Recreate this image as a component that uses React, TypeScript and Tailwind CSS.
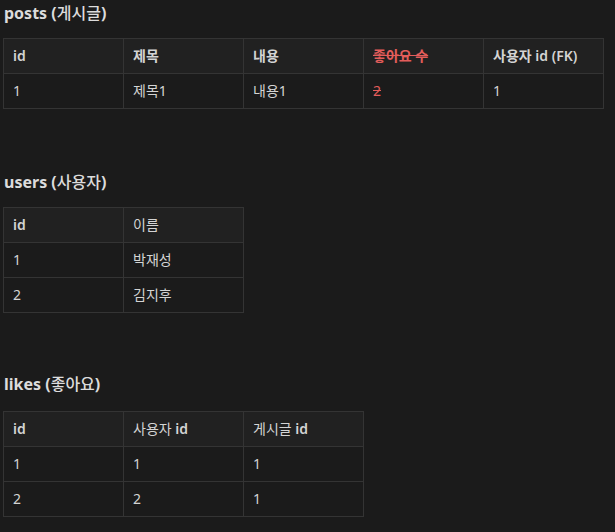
import type { ReactNode } from "react";

const font = {
  fontFamily: '"Noto Sans", "Noto Sans CJK KR", sans-serif',
};

type Cell = string | { text: string; strike: true } | { node: ReactNode };

const Table = ({ head, rows }: { head: Cell[]; rows: Cell[][] }) => {
  const render = (c: Cell) => {
    if (typeof c === "string") return c;
    if ("node" in c) return c.node;
    return <span className="text-[#e35d5b] line-through">{c.text}</span>;
  };
  return (
    <table className="border-collapse table-fixed text-[14px] text-[#d4d4d4]">
      <thead>
        <tr className="bg-[#212121]">
          {head.map((h, i) => (
            <th
              key={i}
              className="w-[120px] h-[35px] border border-[#343434] pl-[9px] pb-[2px] text-left font-semibold"
            >
              {render(h)}
            </th>
          ))}
        </tr>
      </thead>
      <tbody>
        {rows.map((r, i) => (
          <tr key={i}>
            {r.map((c, j) => (
              <td
                key={j}
                className="w-[120px] h-[35px] border border-[#343434] pl-[9px] pb-[2px] text-left"
              >
                {render(c)}
              </td>
            ))}
          </tr>
        ))}
      </tbody>
    </table>
  );
};

const Heading = ({ en, ko, className }: { en: string; ko: string; className: string }) => (
  <h2 className={`pl-px text-[16px] leading-[22px] font-bold text-[#dcdcdc] ${className}`}>
    {en} (<span className="font-medium">{ko}</span>)
  </h2>
);

export default function App() {
  return (
    <div className="min-h-screen bg-[#1b1b1b] pl-[3px] pt-[2px]" style={font}>
      {/* posts */}
      <Heading en="posts" ko="게시글" className="" />
      <div className="mt-[14px]">
        <Table
          head={["id", "제목", "내용", { text: "좋아요 수", strike: true }, "사용자 id (FK)"]}
          rows={[["1", "제목1", "내용1", { text: "2", strike: true }, "1"]]}
        />
      </div>

      {/* users */}
      <Heading en="users" ko="사용자" className="mt-[62px]" />
      <div className="mt-[14px]">
        <Table
          head={["id", { node: <span className="font-normal">이름</span> }]}
          rows={[
            ["1", "박재성"],
            ["2", "김지후"],
          ]}
        />
      </div>

      {/* likes */}
      <Heading en="likes" ko="좋아요" className="mt-[60px]" />
      <div className="mt-[16px]">
        <Table
          head={[
            "id",
            { node: <><span className="font-normal">사용자</span> id</> },
            { node: <><span className="font-normal">게시글</span> id</> },
          ]}
          rows={[
            ["1", "1", "1"],
            ["2", "2", "1"],
          ]}
        />
      </div>
    </div>
  );
}
